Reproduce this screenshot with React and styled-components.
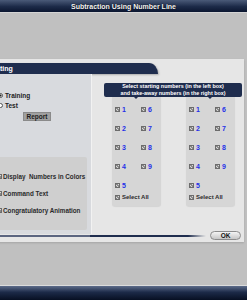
import React from 'react';
import styled, { createGlobalStyle } from 'styled-components';

const GlobalStyle = createGlobalStyle`
    *, *::before, *::after {
        box-sizing: border-box;
    }
    html, body {
        margin: 0;
        padding: 0;
        background: #c0c0c0;
        overflow: hidden;
    }
    body {
        font-family: "Liberation Sans", Arial, sans-serif;
    }
`;

const numberRows = [
    [1, 6],
    [2, 7],
    [3, 8],
    [4, 9],
    [5, null]
];

const App = () => {
    return (
        <Page>
            <GlobalStyle />
            <TitleBar>Subtraction Using Number Line</TitleBar>
            <Workspace>
                <Dialog>
                    <DialogHeader>Setting</DialogHeader>
                    <DialogBody>
                        <LeftPanel>
                            <RadioRow>
                                <Radio checked />
                                Training
                            </RadioRow>
                            <RadioRow>
                                <Radio />
                                Test
                            </RadioRow>
                            <ReportButton>Report</ReportButton>
                            <OptionsBox>
                                <OptionRow>
                                    <Check />
                                    Display&nbsp; Numbers in Colors
                                </OptionRow>
                                <OptionRow>
                                    <Check />
                                    Command Text
                                </OptionRow>
                                <OptionRow>
                                    <Check />
                                    Congratulatory Animation
                                </OptionRow>
                            </OptionsBox>
                        </LeftPanel>
                        <RightArea>
                            <Hint>
                                Select starting numbers (in the left box)
                                <br />
                                and take-away numbers (in the right box)
                            </Hint>
                            <Boxes>
                                {['left', 'right'].map((side) => (
                                    <NumberBox key={side}>
                                        <NumberGrid>
                                            {numberRows.map((pair) =>
                                                pair.map((n, i) =>
                                                    n === null ? (
                                                        <span key={'e' + i} />
                                                    ) : (
                                                        <NumberItem key={n}>
                                                            <Check />
                                                            <Num>{n}</Num>
                                                        </NumberItem>
                                                    )
                                                )
                                            )}
                                        </NumberGrid>
                                        <SelectAll>
                                            <Check />
                                            Select All
                                        </SelectAll>
                                    </NumberBox>
                                ))}
                            </Boxes>
                        </RightArea>
                    </DialogBody>
                    <DialogFooter>
                        <FooterLine />
                        <OkButton>OK</OkButton>
                    </DialogFooter>
                </Dialog>
            </Workspace>
            <BottomBar />
        </Page>
    );
};

const Page = styled.div`
    display: flex;
    flex-direction: column;
    width: 247px;
    height: 300px;
    background: #c0c0c0;
`;

const TitleBar = styled.div`
    height: 13px;
    display: flex;
    align-items: center;
    justify-content: center;
    background: linear-gradient(#4a5a78, #1c2a48 55%, #0b1630);
    border-bottom: 1px solid #d4d4d4;
    color: #f4f4f4;
    font-size: 7px;
    font-weight: bold;
    text-shadow: 0 0 1px #000;
`;

const Workspace = styled.div`
    flex: 1;
    padding-top: 46px;
    background: #c0c0c0;
`;

const Dialog = styled.div`
    margin-left: -20px;
    width: 264px;
    padding-top: 4px;
    background: #e6e6e6;
    box-shadow: 0 1px 2px rgba(0, 0, 0, 0.15);
`;

const DialogHeader = styled.div`
    width: 178px;
    height: 11px;
    padding-left: 9px;
    display: flex;
    align-items: center;
    background: #1f2d4e;
    border-top-right-radius: 9px 11px;
    color: #fff;
    font-size: 7px;
    font-weight: bold;
    box-shadow: 1px 1px 2px rgba(0, 0, 0, 0.25);
`;

const DialogBody = styled.div`
    display: flex;
    height: 160px;
`;

const LeftPanel = styled.div`
    width: 112px;
    padding: 17px 4px 2px 18px;
    display: flex;
    flex-direction: column;
    background: #d8dade;
    border-right: 1px solid #f2f2f2;
`;

const RadioRow = styled.div`
    height: 8px;
    margin-bottom: 2px;
    display: flex;
    align-items: center;
    gap: 2px;
    color: #222;
    font-size: 6.5px;
    font-weight: bold;
`;

const Radio = styled.span`
    width: 5px;
    height: 5px;
    border-radius: 50%;
    border: 1px solid #555;
    background: ${(props) => (props.checked ? 'radial-gradient(#222 40%, #fff 55%)' : '#fff')};
`;

const ReportButton = styled.div`
    align-self: flex-start;
    margin: 1px 0 0 25px;
    width: 28px;
    height: 9px;
    display: flex;
    align-items: center;
    justify-content: center;
    background: #a0a0a0;
    border: 1px solid #8a8a8a;
    color: #1c1c1c;
    font-size: 6.5px;
    font-weight: bold;
`;

const OptionsBox = styled.div`
    margin-top: 36px;
    margin-left: -18px;
    padding: 15px 0 16px 18px;
    display: flex;
    flex-direction: column;
    gap: 9px;
    background: #cfcfcf;
    border-radius: 0 2px 2px 0;
`;

const OptionRow = styled.div`
    height: 8px;
    display: flex;
    align-items: center;
    gap: 1px;
    margin-left: -18px;
    padding-left: 17px;
    color: #2a2a2a;
    font-size: 6.3px;
    font-weight: bold;
    white-space: nowrap;
`;

const Check = styled.span`
    flex: none;
    width: 5px;
    height: 5px;
    border: 1px solid #6c6c6c;
    background: repeating-linear-gradient(45deg, #8a8a8a 0 1px, #d8d8d8 1px 2px);
`;

const RightArea = styled.div`
    flex: 1;
    padding: 9px 0 0 12px;
    display: flex;
    flex-direction: column;
`;

const Hint = styled.div`
    width: 138px;
    height: 14px;
    display: flex;
    align-items: center;
    justify-content: center;
    text-align: center;
    background: #1f2d4e;
    border-radius: 2px;
    color: #fff;
    font-size: 5.4px;
    font-weight: bold;
    line-height: 6.8px;
    white-space: nowrap;
`;

const Boxes = styled.div`
    display: flex;
    gap: 25px;
    padding-left: 8px;
`;

const NumberBox = styled.div`
    position: relative;
    width: 49px;
    height: 109px;
    padding: 6px 0 0 3px;
    display: flex;
    flex-direction: column;
    background: #d6d6d6;
    border-radius: 0 0 3px 3px;
    box-shadow: 0 1px 1px rgba(0, 0, 0, 0.08);

    &::before {
        content: '';
        position: absolute;
        top: 0;
        left: 22px;
        border-left: 2px solid transparent;
        border-right: 2px solid transparent;
        border-top: 2px solid #1f2d4e;
    }
`;

const NumberGrid = styled.div`
    display: grid;
    grid-template-columns: 26px 20px;
    grid-auto-rows: 12px;
    row-gap: 7px;
`;

const NumberItem = styled.div`
    display: flex;
    align-items: center;
    gap: 2px;
`;

const Num = styled.span`
    color: #2430e8;
    font-size: 7px;
    font-weight: bold;
`;

const SelectAll = styled.div`
    margin-top: 1px;
    height: 10px;
    display: flex;
    align-items: center;
    gap: 2px;
    color: #2c2c2c;
    font-size: 6px;
    font-weight: bold;
`;

const DialogFooter = styled.div`
    height: 8px;
    display: flex;
    align-items: flex-start;
    padding-right: 3px;
`;

const FooterLine = styled.div`
    flex: 1;
    height: 2px;
    margin-top: 1px;
    background: linear-gradient(
        to right,
        #5b6580 0,
        #5b6580 110px,
        #1f2d4e 110px,
        #1f2d4e 208px,
        rgba(31, 45, 78, 0.2) 222px,
        transparent 226px
    );
`;

const OkButton = styled.div`
    margin-top: -3px;
    width: 31px;
    height: 9px;
    display: flex;
    align-items: center;
    justify-content: center;
    border: 1px solid #8c8c8c;
    border-radius: 5px;
    background: linear-gradient(#f4f4f4, #c6c6c6);
    color: #111;
    font-size: 6.5px;
    font-weight: bold;
`;

const BottomBar = styled.div`
    height: 15px;
    border-top: 1px solid #dcdcdc;
    background: linear-gradient(#5c6c8a, #1c2a48 45%, #070f22);
`;

export default App;
